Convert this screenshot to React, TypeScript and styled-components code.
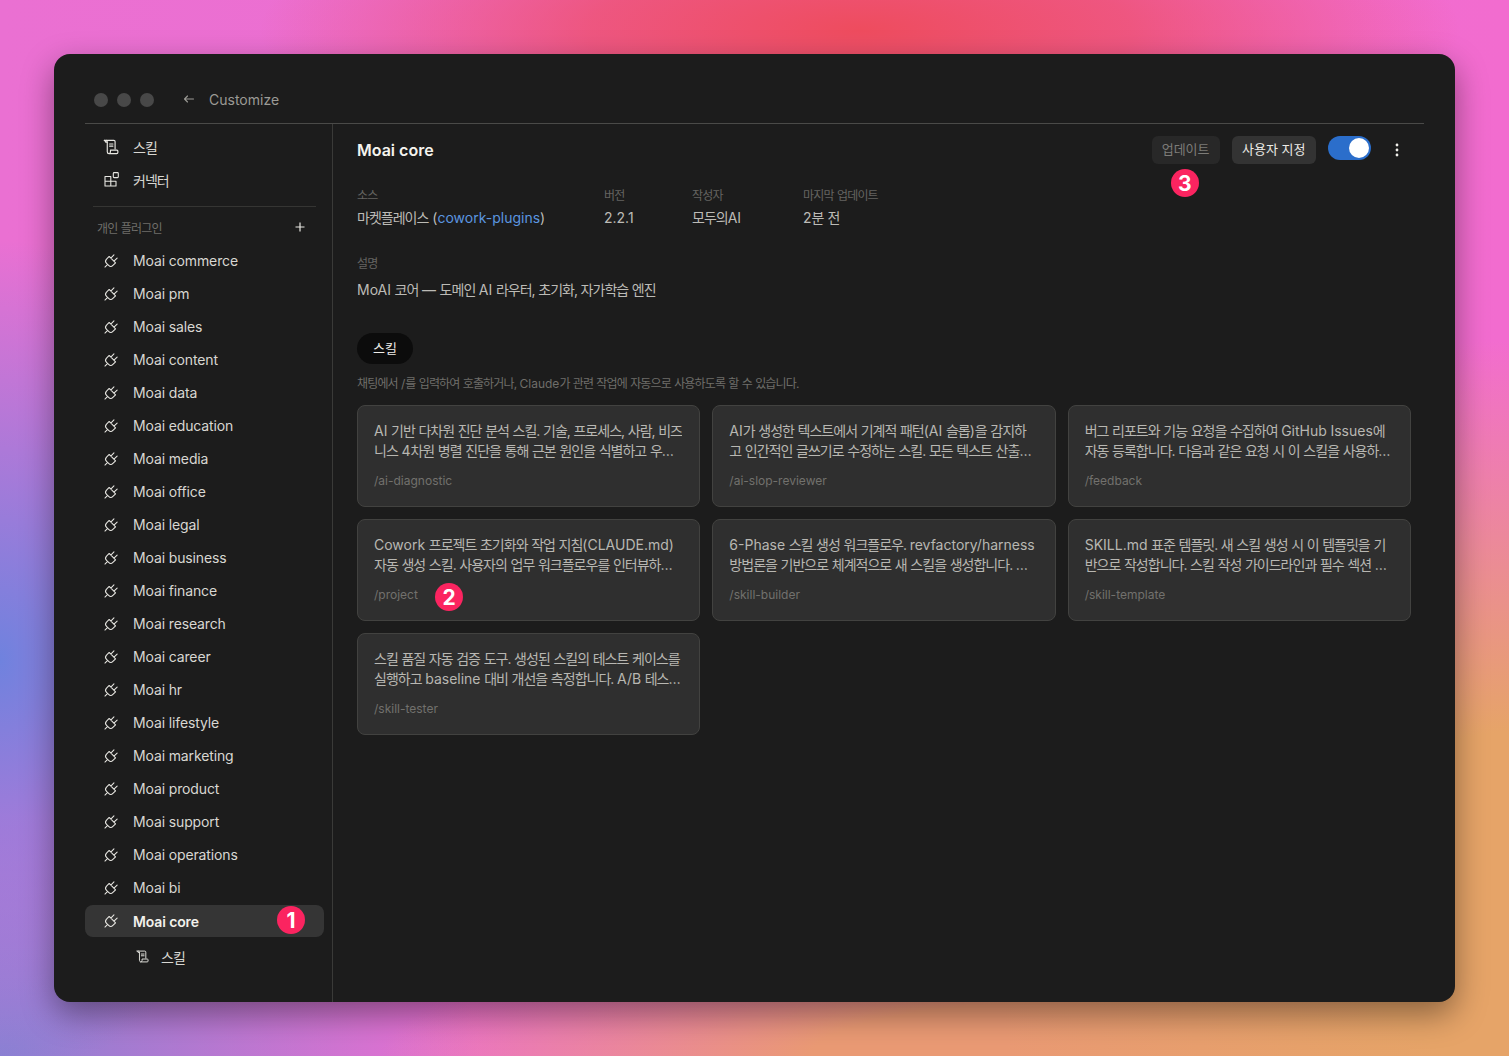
import React, { FunctionComponent } from 'react';
import styled, { createGlobalStyle } from 'styled-components';

const GlobalStyle = createGlobalStyle`
  html, body {
    margin: 0;
    padding: 0;
    height: 100%;
    overflow: hidden;
  }
  * {
    box-sizing: border-box;
  }
  body {
    font-family: Inter, "Noto Sans CJK KR", "Noto Sans", sans-serif;
  }
`;

const Backdrop = styled.div`
  width: 1509px;
  height: 1056px;
  padding: 54px;
  background-color: #d87ac8;
  background-image:
    radial-gradient(ellipse 600px 160px at 860px 30px, #ee4c5e 0%, rgba(238, 76, 94, 0.7) 45%, rgba(238, 76, 94, 0) 100%),
    radial-gradient(ellipse 280px 420px at 0px 660px, #6f82de 0%, rgba(111, 130, 222, 0) 100%),
    radial-gradient(ellipse 520px 560px at 1509px 900px, #e6a468 0%, #e6a468 30%, rgba(230, 164, 104, 0) 100%),
    radial-gradient(ellipse 720px 140px at 1100px 1056px, #ea9a74 0%, #ea9a74 40%, rgba(234, 154, 116, 0) 100%),
    radial-gradient(ellipse 480px 240px at 0px 1056px, #8c80d2 0%, rgba(140, 128, 210, 0) 100%),
    linear-gradient(90deg, #ea70d2, #f26ccf);
`;

const Window = styled.div`
  width: 1401px;
  height: 948px;
  padding: 0 31px;
  background: #1c1c1c;
  border-radius: 16px;
  box-shadow: 0 12px 32px rgba(0, 0, 0, 0.4);
  display: flex;
  flex-direction: column;
  overflow: hidden;
`;

const TitleBar = styled.header`
  height: 70px;
  padding: 23px 0 0 9px;
  display: flex;
  align-items: center;
  border-bottom: 1px solid #4a4a48;
  flex-shrink: 0;
`;

const Dots = styled.div`
  display: flex;
  gap: 9px;
  margin-right: 30px;
`;

const Dot = styled.span`
  width: 14px;
  height: 14px;
  border-radius: 50%;
  background: #484848;
`;

const BackLink = styled.div`
  display: flex;
  align-items: center;
  gap: 15px;
  margin-top: -2px;
  font-size: 14px;
  color: #9b9a95;
`;

const Body = styled.div`
  flex: 1;
  display: flex;
  min-height: 0;
`;

const Sidebar = styled.aside`
  width: 248px;
  flex-shrink: 0;
  padding: 6px 8px 0 0;
  border-right: 1px solid #3a3a38;
`;

const NavItem = styled.div<{ $active?: boolean }>`
  height: ${({ $active }) => ($active ? '32px' : '33px')};
  margin-top: ${({ $active }) => ($active ? '1px' : '0')};
  padding-left: 18px;
  display: flex;
  align-items: center;
  gap: 14px;
  position: relative;
  font-size: 14px;
  letter-spacing: -0.13px;
  font-weight: ${({ $active }) => ($active ? 600 : 400)};
  color: ${({ $active }) => ($active ? '#f2f1ec' : '#d8d7d2')};
  background: ${({ $active }) => ($active ? '#353535' : 'transparent')};
  border-radius: 8px;
`;

const SubItem = styled(NavItem)`
  padding-left: 49px;
  margin-top: 3px;
  gap: 11px;
`;

const IconSlot = styled.span`
  width: 16px;
  flex-shrink: 0;
  display: flex;
  justify-content: center;
  color: #e8e7e2;
  svg {
    flex-shrink: 0;
  }
`;

const SideRule = styled.div`
  height: 1px;
  margin: 10px 8px 0;
  background: #353533;
`;

const SideHeading = styled.div`
  height: 37px;
  padding: 3px 18px 0 12px;
  display: flex;
  align-items: center;
  justify-content: space-between;
  font-size: 12px;
  color: #6f6e6a;
`;

const Main = styled.main`
  flex: 1;
  padding: 12px 13px 0 24px;
  min-width: 0;
`;

const HeaderRow = styled.div`
  height: 28px;
  display: flex;
  align-items: center;
  justify-content: space-between;
`;

const PageTitle = styled.h1`
  margin: 0;
  font-size: 16px;
  font-weight: 600;
  color: #f4f3ee;
`;

const Actions = styled.div`
  display: flex;
  align-items: center;
  position: relative;
`;

const ActionButton = styled.button<{ $muted?: boolean }>`
  height: 28px;
  padding: 0 ${({ $muted }) => ($muted ? '10px' : '10.5px')} 4px;
  margin-right: 12px;
  border: 0;
  border-radius: 6px;
  font-family: inherit;
  font-size: 13px;
  color: ${({ $muted }) => ($muted ? '#7d7c78' : '#ecebe6')};
  background: ${({ $muted }) => ($muted ? '#282828' : '#333333')};
`;

const Toggle = styled.div`
  width: 43px;
  height: 24px;
  margin-top: -4px;
  padding: 2px;
  border-radius: 12px;
  background: #2b6ecb;
  display: flex;
  justify-content: flex-end;
  &::after {
    content: '';
    width: 20px;
    height: 20px;
    border-radius: 50%;
    background: #fff;
  }
`;

const MoreButton = styled.div`
  width: 40px;
  padding-left: 24px;
  display: flex;
  color: #f0efea;
`;

const MetaRow = styled.div`
  display: flex;
  margin-top: 24px;
`;

const MetaColumn = styled.div<{ $width: number }>`
  width: ${({ $width }) => $width}px;
`;

const MetaLabel = styled.div`
  font-size: 12px;
  line-height: 16px;
  color: #656461;
`;

const MetaValue = styled.div`
  margin-top: 4px;
  font-size: 14px;
  line-height: 20px;
  color: #bcbbb6;
`;

const SourceLink = styled.span`
  color: #5b96e0;
`;

const Description = styled.section`
  margin-top: 28px;
`;

const DescriptionText = styled(MetaValue)`
  margin-top: 8px;
  word-spacing: -0.35px;
`;

const TabPill = styled.div`
  width: 56px;
  height: 31px;
  margin-top: 33px;
  padding-bottom: 2px;
  border-radius: 16px;
  background: #0c0c0c;
  display: flex;
  align-items: center;
  justify-content: center;
  font-size: 13px;
  color: #eeede8;
`;

const Hint = styled.p`
  margin: 12px 0 0;
  font-size: 12px;
  line-height: 16px;
  word-spacing: -0.2px;
  color: #6f6e6a;
`;

const CardGrid = styled.div`
  display: grid;
  grid-template-columns: repeat(3, 1fr);
  gap: 12px;
  margin-top: 13px;
`;

const Card = styled.article`
  height: 102px;
  padding: 15px 17px 0 16px;
  background: #2f2f2f;
  border: 1px solid #424240;
  border-radius: 8px;
  position: relative;
`;

const CardText = styled.p`
  margin: 0;
  font-size: 14px;
  line-height: 20px;
  word-spacing: -0.35px;
  color: #b8b7b2;
  display: -webkit-box;
  -webkit-box-orient: vertical;
  -webkit-line-clamp: 2;
  overflow: hidden;
`;

const CardCommand = styled.div`
  margin-top: 12px;
  font-size: 12px;
  line-height: 16px;
  color: #72716d;
`;

const Marker = styled.span`
  position: absolute;
  width: 28px;
  height: 28px;
  border-radius: 50%;
  background: #fb2460;
  color: #fff;
  font-size: 21px;
  font-weight: 700;
  display: flex;
  align-items: center;
  justify-content: center;
  font-family: Inter, sans-serif;
`;

const SidebarMarker = styled(Marker)`
  left: 192px;
  top: 1px;
`;

const CardMarker = styled(Marker)`
  left: 77px;
  top: 63px;
`;

const UpdateMarker = styled(Marker)`
  left: 19px;
  top: 33px;
`;

// hangul and its punctuation sit tighter in the reference than Noto's default advance
const HangulRun = styled.span`
  letter-spacing: -0.07em;
`;

const Ko: FunctionComponent<{ children: string }> = ({ children }) => (
  <>
    {children.split(/([\uac00-\ud7a3]+|[.,](?= ))/).map((part, i) =>
      i % 2 === 1 ? <HangulRun key={i}>{part}</HangulRun> : part,
    )}
  </>
);

const ScrollIcon: FunctionComponent<{ size?: number }> = ({ size = 16 }) => (
  <svg width={size} height={size} viewBox="0 0 18 18" fill="none" stroke="currentColor" strokeWidth="1.3" strokeLinejoin="round" strokeLinecap="round">
    <path d="M1.500 1.500h10.700c.9 0 1.400.6 1.400 1.400v8.300" />
    <path d="M1.500 1.500c.9.2 1.300.9 1.500 2h1.800" />
    <path d="M3.800 1.600c.8.6 1 1.400 1 2.400v10.300c0 1.300.8 2.200 2 2.200h8.700c.8 0 1.200-.5 1.200-1.200v-1.700c0-.7-.4-1.100-1.100-1.100H8.400v1.800c0 1.200-.6 2-1.600 2.200" />
    <path d="M7.400 5.600h3.800M7.400 8h3.800" />
  </svg>
);

const BlocksIcon: FunctionComponent = () => (
  <svg width="15" height="15" viewBox="0 0 15 15" fill="none" stroke="currentColor" strokeWidth="1.1" strokeLinejoin="round">
    <path d="M1 4.500h5.800v9.500H1zM1 9.300h11v4.700H6.800M6.800 4.500v4.800" />
    <rect x="9.300" y="0.600" width="5" height="5" rx="0.800" />
  </svg>
);

const PlugIcon: FunctionComponent = () => (
  <svg width="18" height="18" viewBox="1 -1 24 24" fill="none" stroke="currentColor" strokeWidth="1.4" strokeLinecap="round" strokeLinejoin="round">
    <g transform="rotate(45 12 12)">
      <path d="M12 22v-5M9 8V2M15 8V2M18 8v5a4 4 0 0 1-4 4h-4a4 4 0 0 1-4-4V8Z" />
    </g>
  </svg>
);

const plugins = [
  'commerce', 'pm', 'sales', 'content', 'data', 'education', 'media', 'office', 'legal', 'business',
  'finance', 'research', 'career', 'hr', 'lifestyle', 'marketing', 'product', 'support', 'operations', 'bi',
];

const skills = [
  {
    text: 'AI 기반 다차원 진단 분석 스킬. 기술, 프로세스, 사람, 비즈니스 4차원 병렬 진단을 통해 근본 원인을 식별하고 우선순위를 제안합니다. 진단 결과를 보고서로 정리합니다.',
    command: '/ai-diagnostic',
  },
  {
    text: 'AI가 생성한 텍스트에서 기계적 패턴(AI 슬롭)을 감지하고 인간적인 글쓰기로 수정하는 스킬. 모든 텍스트 산출물의 품질을 높이기 위해 사용합니다. 자동으로 검토합니다.',
    command: '/ai-slop-reviewer',
  },
  {
    text: '버그 리포트와 기능 요청을 수집하여 GitHub Issues에 자동 등록합니다. 다음과 같은 요청 시 이 스킬을 사용하세요. 피드백을 남기고 싶을 때 사용합니다.',
    command: '/feedback',
  },
  {
    text: 'Cowork 프로젝트 초기화와 작업 지침(CLAUDE.md) 자동 생성 스킬. 사용자의 업무 워크플로우를 인터뷰하여 프로젝트 구조와 지침을 자동으로 생성합니다.',
    command: '/project',
  },
  {
    text: '6-Phase 스킬 생성 워크플로우. revfactory/harness 방법론을 기반으로 체계적으로 새 스킬을 생성합니다. 스킬을 만들고 싶을 때 사용하세요. 평가까지 진행합니다.',
    command: '/skill-builder',
  },
  {
    text: 'SKILL.md 표준 템플릿. 새 스킬 생성 시 이 템플릿을 기반으로 작성합니다. 스킬 작성 가이드라인과 필수 섹션 구성을 안내합니다. 표준을 따르도록 돕습니다.',
    command: '/skill-template',
  },
  {
    text: '스킬 품질 자동 검증 도구. 생성된 스킬의 테스트 케이스를 실행하고 baseline 대비 개선을 측정합니다. A/B 테스트를 지원하며 결과를 리포트로 제공합니다.',
    command: '/skill-tester',
  },
];

const App: FunctionComponent = () => (
  <Backdrop>
    <GlobalStyle />
    <Window>
      <TitleBar>
        <Dots>
          <Dot />
          <Dot />
          <Dot />
        </Dots>
        <BackLink>
          <svg width="10" height="10" viewBox="0 0 10 10" fill="none" stroke="#9b9a95" strokeWidth="1.1" strokeLinecap="round" strokeLinejoin="round">
            <path d="M9.500 5h-9M3.500 2L0.500 5l3 3" />
          </svg>
          Customize
        </BackLink>
      </TitleBar>
      <Body>
        <Sidebar>
          <NavItem>
            <IconSlot>
              <ScrollIcon />
            </IconSlot>
            <span><Ko>스킬</Ko></span>
          </NavItem>
          <NavItem>
            <IconSlot>
              <BlocksIcon />
            </IconSlot>
            <span><Ko>커넥터</Ko></span>
          </NavItem>
          <SideRule />
          <SideHeading>
            <span><Ko>개인 플러그인</Ko></span>
            <svg width="12" height="12" viewBox="0 0 12 12" fill="none" stroke="#e8e7e2" strokeWidth="1.2">
              <path d="M6 1.500v9M1.500 6h9" />
            </svg>
          </SideHeading>
          {plugins.map((name) => (
            <NavItem key={name}>
              <IconSlot>
                <PlugIcon />
              </IconSlot>
              <span>Moai {name}</span>
            </NavItem>
          ))}
          <NavItem $active>
            <IconSlot>
              <PlugIcon />
            </IconSlot>
            <span>Moai core</span>
            <SidebarMarker>1</SidebarMarker>
          </NavItem>
          <SubItem>
            <IconSlot>
              <ScrollIcon size={13} />
            </IconSlot>
            <span><Ko>스킬</Ko></span>
          </SubItem>
        </Sidebar>
        <Main>
          <HeaderRow>
            <PageTitle>Moai core</PageTitle>
            <Actions>
              <ActionButton $muted>업데이트</ActionButton>
              <UpdateMarker>3</UpdateMarker>
              <ActionButton>사용자 지정</ActionButton>
              <Toggle />
              <MoreButton>
                <svg width="4" height="14" viewBox="0 0 4 14" fill="currentColor">
                  <circle cx="2" cy="2" r="1.400" />
                  <circle cx="2" cy="7" r="1.400" />
                  <circle cx="2" cy="12" r="1.400" />
                </svg>
              </MoreButton>
            </Actions>
          </HeaderRow>
          <MetaRow>
            <MetaColumn $width={247}>
              <MetaLabel><Ko>소스</Ko></MetaLabel>
              <MetaValue>
                <Ko>마켓플레이스 (</Ko><SourceLink>cowork-plugins</SourceLink>)
              </MetaValue>
            </MetaColumn>
            <MetaColumn $width={88}>
              <MetaLabel><Ko>버전</Ko></MetaLabel>
              <MetaValue>2.2.1</MetaValue>
            </MetaColumn>
            <MetaColumn $width={111}>
              <MetaLabel><Ko>작성자</Ko></MetaLabel>
              <MetaValue><Ko>모두의AI</Ko></MetaValue>
            </MetaColumn>
            <MetaColumn $width={200}>
              <MetaLabel><Ko>마지막 업데이트</Ko></MetaLabel>
              <MetaValue><Ko>2분 전</Ko></MetaValue>
            </MetaColumn>
          </MetaRow>
          <Description>
            <MetaLabel><Ko>설명</Ko></MetaLabel>
            <DescriptionText><Ko>MoAI 코어 — 도메인 AI 라우터, 초기화, 자가학습 엔진</Ko></DescriptionText>
          </Description>
          <TabPill>스킬</TabPill>
          <Hint><Ko>채팅에서 /를 입력하여 호출하거나, Claude가 관련 작업에 자동으로 사용하도록 할 수 있습니다.</Ko></Hint>
          <CardGrid>
            {skills.map((skill) => (
              <Card key={skill.command}>
                <CardText><Ko>{skill.text}</Ko></CardText>
                <CardCommand>{skill.command}</CardCommand>
                {skill.command === '/project' && <CardMarker>2</CardMarker>}
              </Card>
            ))}
          </CardGrid>
        </Main>
      </Body>
    </Window>
  </Backdrop>
);

export default App;
